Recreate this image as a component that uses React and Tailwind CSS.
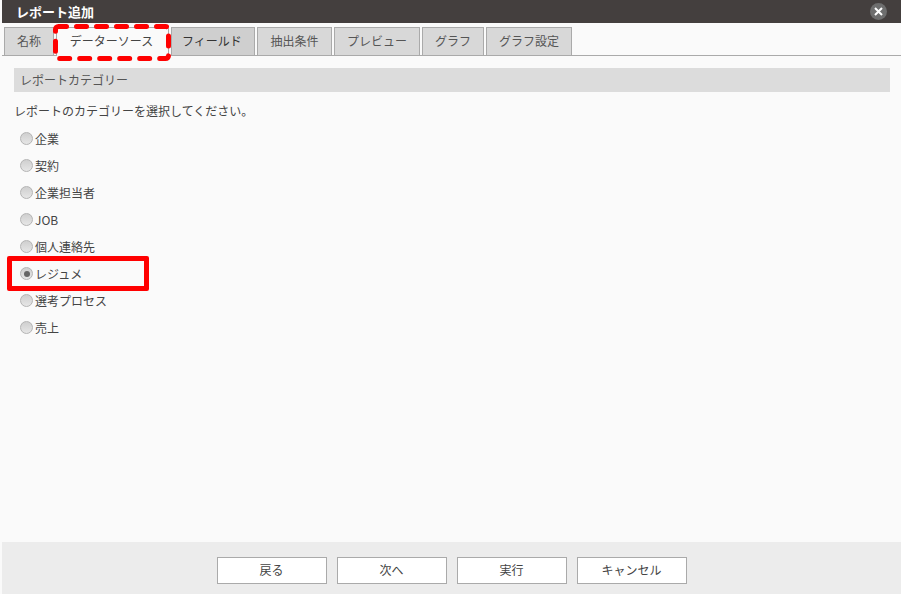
import React from 'react';

const tabs = [
  { label: '名称', width: 'w-[50px]' },
  { label: 'データーソース', width: 'w-[113px]', active: true },
  { label: 'フィールド', width: 'w-[84px]', dark: true },
  { label: '抽出条件', width: 'w-[75px]' },
  { label: 'プレビュー', width: 'w-[86px]' },
  { label: 'グラフ', width: 'w-[62px]' },
  { label: 'グラフ設定', width: 'w-[86px]' },
];

const categories = ['企業', '契約', '企業担当者', 'JOB', '個人連絡先', 'レジュメ', '選考プロセス', '売上'];
const buttons = ['戻る', '次へ', '実行', 'キャンセル'];

const Radio = ({ checked }) => (
  <span className="flex h-[13px] w-[13px] shrink-0 items-center justify-center rounded-full border border-[#b4b4b4] bg-gradient-to-b from-[#cfcfcf] to-[#e6e6e6]">
    {checked && <span className="h-1.5 w-1.5 rounded-full bg-[#666]" />}
  </span>
);

export default function App() {
  return (
    <div className="relative flex h-[594px] w-[901px] flex-col bg-[#fafafa] pl-[2px] text-[12px] text-[#444] [font-family:'Noto_Sans_CJK_JP','Noto_Sans',sans-serif]">
      <header className="flex h-[23px] shrink-0 items-center justify-between bg-[#443f3e] pl-[14px] pr-[14px]">
        <h1 className="text-[13px] font-bold leading-none text-white">レポート追加</h1>
        <span className="flex h-[17px] w-[17px] items-center justify-center rounded-full bg-[#6e6e6e]">
          <svg width="9" height="9" viewBox="0 0 9 9" fill="none" stroke="white" strokeWidth="2">
            <path d="M1 1l7 7M8 1l-7 7" />
          </svg>
        </span>
      </header>

      <nav className="mt-1 flex h-[29px] shrink-0 gap-[2px] border-b border-[#aaa] pl-[2px]">
        {tabs.map((tab) => (
          <div
            key={tab.label}
            className={`flex h-[28px] items-center justify-center border border-b-0 border-[#aaa] pb-[2px] ${tab.width} ${
              tab.active
                ? 'h-[29px] bg-[#fafafa] pr-[2px]'
                : tab.dark
                  ? 'bg-[#cfcfcf] pr-[2px] text-[#333]'
                  : 'bg-[#d8d8d8] text-[#555]'
            }`}
          >
            {tab.label}
          </div>
        ))}
      </nav>

      <main className="flex-1 pl-3 pr-[11px] pt-3">
        <div className="flex h-6 items-center bg-[#dcdcdc] pl-[6px] text-[#555]">レポートカテゴリー</div>
        <p className="mt-[10px] leading-[18px]">レポートのカテゴリーを選択してください。</p>
        <ul className="mt-[5px] pl-[6px]">
          {categories.map((name) => (
            <li key={name} className="flex h-[27px] items-center gap-[2px]">
              <Radio checked={name === 'レジュメ'} />
              <span>{name}</span>
            </li>
          ))}
        </ul>
      </main>

      <footer className="flex h-[52px] shrink-0 items-start justify-center gap-[10px] bg-[#ececec] pt-[15px]">
        {buttons.map((label) => (
          <button key={label} className="h-[27px] w-[110px] border border-[#aaa] bg-white pb-[2px] text-[12px] text-[#444]">
            {label}
          </button>
        ))}
      </footer>

      {/* annotations drawn over the screenshot */}
      <svg className="absolute left-[53px] top-[24px]" width="118" height="37" fill="none">
        <rect
          x="2.5"
          y="2.5"
          width="113"
          height="32"
          rx="3"
          stroke="#ff0000"
          strokeWidth="5"
          strokeLinecap="round"
          strokeDasharray="10 10"
          strokeDashoffset="2"
        />
      </svg>
      <div className="absolute left-[7px] top-[256px] h-[35px] w-[142px] rounded-[2px] border-[5px] border-[#ff0000]" />
    </div>
  );
}
